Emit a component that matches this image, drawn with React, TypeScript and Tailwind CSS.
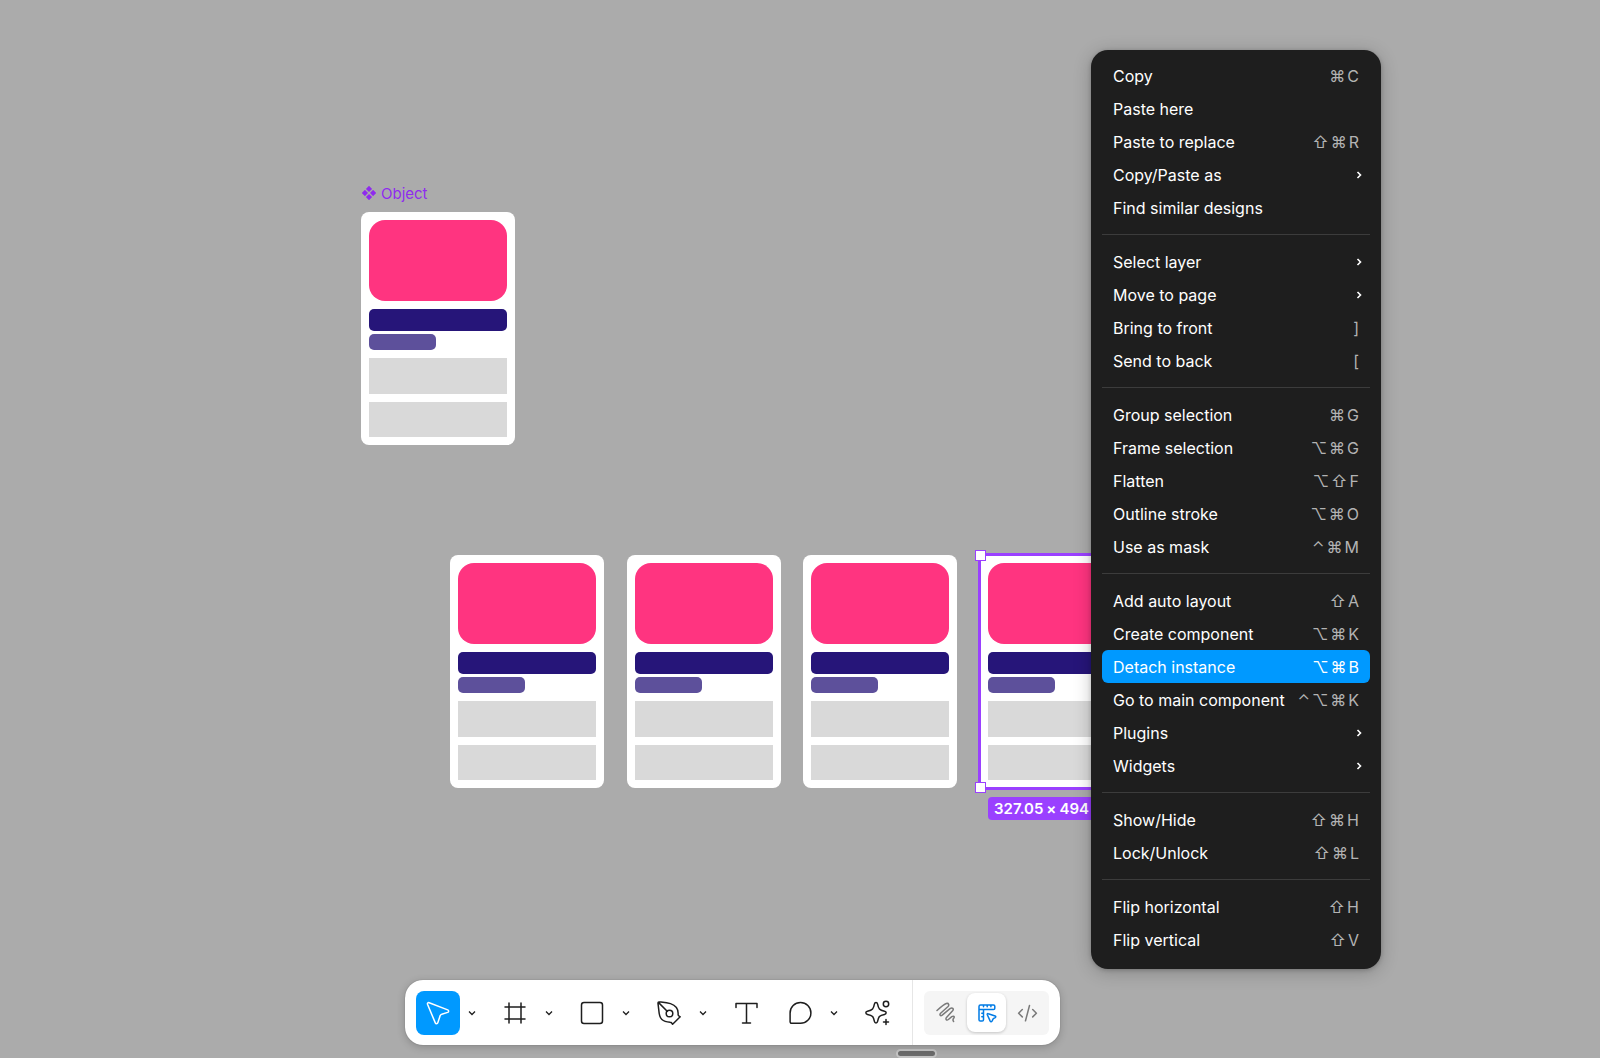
import type { ReactNode } from "react";

type MenuItem = {
  label: string;
  keys?: string[];
  submenu?: boolean;
  active?: boolean;
};

const MENU: MenuItem[][] = [
  [
    { label: "Copy", keys: ["⌘", "C"] },
    { label: "Paste here" },
    { label: "Paste to replace", keys: ["⇧", "⌘", "R"] },
    { label: "Copy/Paste as", submenu: true },
    { label: "Find similar designs" },
  ],
  [
    { label: "Select layer", submenu: true },
    { label: "Move to page", submenu: true },
    { label: "Bring to front", keys: ["]"] },
    { label: "Send to back", keys: ["["] },
  ],
  [
    { label: "Group selection", keys: ["⌘", "G"] },
    { label: "Frame selection", keys: ["⌥", "⌘", "G"] },
    { label: "Flatten", keys: ["⌥", "⇧", "F"] },
    { label: "Outline stroke", keys: ["⌥", "⌘", "O"] },
    { label: "Use as mask", keys: ["⌃", "⌘", "M"] },
  ],
  [
    { label: "Add auto layout", keys: ["⇧", "A"] },
    { label: "Create component", keys: ["⌥", "⌘", "K"] },
    { label: "Detach instance", keys: ["⌥", "⌘", "B"], active: true },
    { label: "Go to main component", keys: ["⌃", "⌥", "⌘", "K"] },
    { label: "Plugins", submenu: true },
    { label: "Widgets", submenu: true },
  ],
  [
    { label: "Show/Hide", keys: ["⇧", "⌘", "H"] },
    { label: "Lock/Unlock", keys: ["⇧", "⌘", "L"] },
  ],
  [
    { label: "Flip horizontal", keys: ["⇧", "H"] },
    { label: "Flip vertical", keys: ["⇧", "V"] },
  ],
];

function ObjectCard() {
  return (
    <div className="w-[154px] rounded-lg bg-white p-2">
      <div className="h-[81px] rounded-2xl bg-[#ff3480]" />
      <div className="mt-2 h-[22px] rounded-[5px] bg-[#261579]" />
      <div className="mt-[3px] h-4 w-[67px] rounded-[5px] bg-[#5d509b]" />
      <div className="mt-2 h-9 bg-[#d9d9d9]" />
      <div className="mt-2 h-[35px] bg-[#d9d9d9]" />
    </div>
  );
}

function Icon({ children }: { children: ReactNode }) {
  return (
    <svg
      viewBox="0 0 28 28"
      className="size-7"
      fill="none"
      stroke="currentColor"
      strokeWidth="1.5"
      strokeLinecap="round"
      strokeLinejoin="round"
      aria-hidden="true"
    >
      {children}
    </svg>
  );
}

function ContextMenu() {
  return (
    <div
      role="menu"
      className="absolute left-[1091px] top-[50px] w-[290px] rounded-[17px] bg-[#1e1e1e] px-[11px] pt-[9px] pb-[13px] shadow-[0_3px_18px_rgba(0,0,0,0.22),0_1px_4px_rgba(0,0,0,0.2)]"
    >
      {MENU.map((group, i) => (
        <div key={group[0].label} role="group">
          {i > 0 && <div role="separator" className="my-[10px] h-px bg-[#3c3c3c]" />}
          {group.map((item) => (
            <button
              key={item.label}
              role="menuitem"
              className={`flex h-[33px] w-full items-center justify-between rounded-md px-[11px] text-base text-white ${
                item.active ? "bg-[#0099ff]" : ""
              }`}
            >
              <span className="whitespace-nowrap">{item.label}</span>
              {item.keys && (
                <kbd
                  className={`flex gap-[2px] font-[Inter,sans-serif] text-base ${
                    item.active ? "text-white" : "text-[#b3b3b3]"
                  }`}
                >
                  {item.keys.map((k) => (
                    <span key={k}>{k}</span>
                  ))}
                </kbd>
              )}
              {item.submenu && (
                <svg viewBox="0 0 8 10" className="-mr-1 h-[10px] w-2" fill="none" stroke="currentColor" strokeWidth="1.6">
                  <path d="M2.500 2l3 3-3 3" />
                </svg>
              )}
            </button>
          ))}
        </div>
      ))}
    </div>
  );
}

function ToolButton({
  label,
  active,
  children,
}: {
  label: string;
  active?: boolean;
  children: ReactNode;
}) {
  return (
    <button
      aria-label={label}
      className={`flex size-11 items-center justify-center rounded-lg ${
        active ? "bg-[#0099ff] text-white" : "text-[#1e1e1e]"
      }`}
    >
      <Icon>{children}</Icon>
    </button>
  );
}

function Chevron({ label }: { label: string }) {
  return (
    <button aria-label={label} className="flex h-11 w-[23px] items-center justify-center text-[#1e1e1e]">
      <svg viewBox="0 0 10 8" className="h-2 w-[10px]" fill="none" stroke="currentColor" strokeWidth="1.3">
        <path d="M2 2.500l3 3 3-3" />
      </svg>
    </button>
  );
}

function Toolbar() {
  return (
    <div
      role="toolbar"
      className="absolute bottom-[13px] left-[405px] flex h-[65px] items-stretch rounded-[18px] bg-white shadow-[0_2px_8px_rgba(0,0,0,0.2),0_0_1px_rgba(0,0,0,0.4)]"
    >
      <div className="flex items-center gap-[10px] pl-[11px] pr-[13px]">
        <div className="flex">
          <ToolButton label="Move" active>
            <path d="M3.600 5.500c-.5-1.300.4-2.200 1.600-1.800l18.500 7.200c1.300.5 1.200 2.100 0 2.500l-6 1.800c-.8.2-1.200.7-1.500 1.400l-2.400 7.200c-.4 1.300-2 1.300-2.500.1z" />
          </ToolButton>
          <Chevron label="Move tools" />
        </div>
        <div className="flex">
          <ToolButton label="Frame">
            <path d="M8 4v20M20 4v20M4 8h20M4 20h20" />
          </ToolButton>
          <Chevron label="Region tools" />
        </div>
        <div className="flex">
          <ToolButton label="Rectangle">
            <rect x="3.500" y="3.500" width="21" height="21" rx="2.500" />
          </ToolButton>
          <Chevron label="Shape tools" />
        </div>
        <div className="flex">
          <ToolButton label="Pen">
            <path d="M3 4.300c0-1.100.6-1.500 1.500-1.400 4.200.4 7.500.6 11 1.700 5 1.600 8 5.500 7.600 10.800 0 .8.300 1.300.9 1.600l1.200.8-7.600 7.500-.9-1.300c-.3-.5-.8-.8-1.600-.8C7 22.500 5 19.500 4.200 14.500zM3.600 3.600l8.600 8.600" />
            <circle cx="14.500" cy="14.500" r="3.300" />
          </ToolButton>
          <Chevron label="Drawing tools" />
        </div>
        <ToolButton label="Text">
          <path d="M4 8.500V4.500h21v4M14.500 4.500v19.500M10.500 24h8" />
        </ToolButton>
        <div className="flex">
          <ToolButton label="Comment">
            <path d="M14.500 3.500a10.400 10.400 0 1 1 0 20.800H5.600a1.500 1.500 0 0 1-1.500-1.500V13.900A10.400 10.400 0 0 1 14.500 3.500z" />
          </ToolButton>
          <Chevron label="Comment tools" />
        </div>
        <ToolButton label="Actions">
          <path d="M13 3.600c1 0 1.400.6 1.600 1.600.9 4.600 1.700 5.900 6.900 7 2.200.5 2.200 2.700 0 3.200-5.200 1.100-6 2.400-6.900 7-.4 2-2.800 2-3.200 0-.9-4.600-1.700-5.900-6.900-7-2.200-.5-2.200-2.700 0-3.200 5.200-1.100 6-2.400 6.900-7 .2-1 .6-1.600 1.600-1.600zM23 20.500v5M20.500 23h5" />
          <circle cx="23" cy="5" r="2.700" />
        </ToolButton>
      </div>
      <div className="flex items-center border-l border-[#e6e6e6] px-[11px]">
        <div className="flex h-11 items-center gap-[2px] rounded-md bg-[#f5f5f5] px-[2px]">
          <button aria-label="Draw" className="flex size-[39px] items-center justify-center rounded-[5px] text-[#7a7a7a]">
            <Icon>
              <path d="M5 11.500C8.500 8.300 12 5.200 14.300 4.500C16.800 3.900 17.500 6 15.800 7.800L8.600 14.200C7.200 15.800 8.400 17.400 10.200 16.200L18 9.700C20.300 8 22.200 9.800 20.600 11.700L14.500 18.400C13.200 20.300 14.600 21.800 16.400 20.500L19.800 17.700C21.600 16.500 22.800 17.600 21.800 19C20.800 20.300 20.600 21.300 21.600 22.400" />
            </Icon>
          </button>
          <button
            aria-label="Design"
            className="flex size-[39px] items-center justify-center rounded-lg bg-white text-[#007be5] shadow-[0_1px_3px_rgba(0,0,0,0.2)]"
          >
            <Icon>
              <path d="M7.500 6H20.500a1.300 1.300 0 0 1 1.300 1.300v2a1.300 1.300 0 0 1-1.300 1.300H10.500V20.700a1.300 1.300 0 0 1-1.300 1.300H7.300A1.300 1.300 0 0 1 6 20.700V7.500A1.500 1.500 0 0 1 7.500 6zM10.500 6.500v1.200M14.200 6.500v1.200M17.900 6.500v1.200M6.500 10.600h4M8.800 14.200h1.500M8.800 17.800h1.500" />
              <path d="M14.300 15.700c-.3-.8.2-1.300 1-1l6.800 2.300c.9.300.9 1.200.2 1.600l-2 1-1.300 2.500c-.5.800-1.400.8-1.800 0z" />
            </Icon>
          </button>
          <button aria-label="Dev Mode" className="flex size-[39px] items-center justify-center rounded-[5px] text-[#7a7a7a]">
            <Icon>
              <path d="M8.300 10.500l-3.700 3.700 3.700 3.700M18.700 10.500l3.700 3.700-3.700 3.700M15.500 6.500l-4 15.300" />
            </Icon>
          </button>
        </div>
      </div>
    </div>
  );
}

export default function App() {
  return (
    <main className="relative h-screen w-full overflow-hidden bg-[#ababab] font-[Inter,sans-serif]">
      {/* Main component */}
      <section className="absolute left-[361px] top-[182px]">
        <div className="flex h-[30px] items-start gap-1 text-[#8f2bee]">
          <svg
            viewBox="0 0 16 16"
            className="mt-[3px] size-4"
            fill="currentColor"
            stroke="currentColor"
            strokeWidth="0.4"
            strokeLinejoin="round"
            aria-hidden="true"
          >
            <path d="M8 1l2.900 2.900L8 6.800 5.100 3.900zM8 9.200l2.900 2.900L8 15l-2.900-2.900zM3.900 5.100l2.900 2.900-2.900 2.900L1 8zM12.100 5.100L15 8l-2.900 2.900L9.200 8z" />
          </svg>
          <span className="text-[15px] leading-6">Object</span>
        </div>
        <ObjectCard />
      </section>

      {/* Instances */}
      <div className="absolute left-[450px] top-[555px]">
        <ObjectCard />
      </div>
      <div className="absolute left-[627px] top-[555px]">
        <ObjectCard />
      </div>
      <div className="absolute left-[803px] top-[555px]">
        <ObjectCard />
      </div>
      <div className="absolute left-[980px] top-[555px]">
        <ObjectCard />
        <div className="absolute -inset-[2px] border-3 border-[#9a40ff]" />
        <div className="absolute -left-[5px] -top-[5px] size-[11px] border border-[#9a40ff] bg-white" />
        <div className="absolute -bottom-[5px] -left-[5px] size-[11px] border border-[#9a40ff] bg-white" />
        <div className="absolute left-2 top-[242px] flex h-[23px] w-[138px] gap-[3px] rounded bg-[#9a40ff] px-[6px] text-[15px] leading-[23px] font-semibold text-white">
          <span>327.05</span>
          <span>×</span>
          <span>494</span>
        </div>
      </div>

      <div className="absolute bottom-0 left-[896px] h-[9px] w-[41px] rounded-full border-2 border-[#c4c4c4] bg-[#6b6b6b]" />
      <Toolbar />
      <ContextMenu />
    </main>
  );
}
